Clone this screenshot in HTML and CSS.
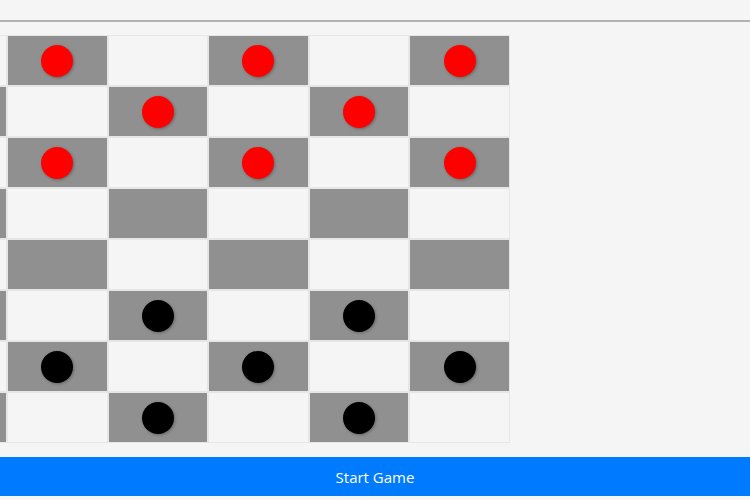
FILE: index.html
```html
<!DOCTYPE html>
<html lang="en">
<head>
<meta charset="utf-8">
<title>Checkers</title>
<link rel="stylesheet" href="styles.css">
</head>
<body>
<header class="topbar"></header>
<main class="stage">
  <div class="board">
    <div class="cell"></div><div class="cell dark"><span class="piece red"></span></div><div class="cell"></div><div class="cell dark"><span class="piece red"></span></div><div class="cell"></div><div class="cell dark"><span class="piece red"></span></div><div class="cell"></div><div class="cell dark"><span class="piece red"></span></div>
    <div class="cell dark"><span class="piece red"></span></div><div class="cell"></div><div class="cell dark"><span class="piece red"></span></div><div class="cell"></div><div class="cell dark"><span class="piece red"></span></div><div class="cell"></div><div class="cell dark"><span class="piece red"></span></div><div class="cell"></div>
    <div class="cell"></div><div class="cell dark"><span class="piece red"></span></div><div class="cell"></div><div class="cell dark"><span class="piece red"></span></div><div class="cell"></div><div class="cell dark"><span class="piece red"></span></div><div class="cell"></div><div class="cell dark"><span class="piece red"></span></div>
    <div class="cell dark"></div><div class="cell"></div><div class="cell dark"></div><div class="cell"></div><div class="cell dark"></div><div class="cell"></div><div class="cell dark"></div><div class="cell"></div>
    <div class="cell"></div><div class="cell dark"></div><div class="cell"></div><div class="cell dark"></div><div class="cell"></div><div class="cell dark"></div><div class="cell"></div><div class="cell dark"></div>
    <div class="cell dark"><span class="piece black"></span></div><div class="cell"></div><div class="cell dark"><span class="piece black"></span></div><div class="cell"></div><div class="cell dark"><span class="piece black"></span></div><div class="cell"></div><div class="cell dark"><span class="piece black"></span></div><div class="cell"></div>
    <div class="cell"></div><div class="cell dark"><span class="piece black"></span></div><div class="cell"></div><div class="cell dark"><span class="piece black"></span></div><div class="cell"></div><div class="cell dark"><span class="piece black"></span></div><div class="cell"></div><div class="cell dark"><span class="piece black"></span></div>
    <div class="cell dark"><span class="piece black"></span></div><div class="cell"></div><div class="cell dark"><span class="piece black"></span></div><div class="cell"></div><div class="cell dark"><span class="piece black"></span></div><div class="cell"></div><div class="cell dark"><span class="piece black"></span></div><div class="cell"></div>
  </div>
</main>
<button class="start-btn" type="button">Start Game</button>
</body>
</html>
```
FILE: styles.css
```css
* { box-sizing: border-box; }

html, body {
  margin: 0;
  padding: 0;
  height: 100%;
  overflow: hidden;
}

body {
  background: #f5f5f5;
  font-family: "Open Sans", "Noto Sans", "Liberation Sans", sans-serif;
  display: flex;
  flex-direction: column;
}

.topbar {
  height: 22px;
  border-bottom: 2px solid #b3b3b3;
  flex: none;
}

.stage {
  flex: none;
  padding-top: 13px;
}

.board {
  width: 805px;
  margin-left: -295px;
  display: grid;
  grid-template-columns: repeat(8, 1fr);
  grid-auto-rows: 51px;
}

.cell {
  background: #f5f5f5;
  border: 1px solid #e6e6e6;
  display: flex;
  align-items: center;
  justify-content: center;
}

.cell.dark {
  background: #909090;
}

.piece {
  width: 32px;
  height: 32px;
  border-radius: 50%;
  box-shadow: 1px 1px 3px rgba(0, 0, 0, 0.3);
}

.piece.red { background: #ff0000; }
.piece.black { background: #000000; }

.start-btn {
  flex: none;
  margin-top: 14px;
  height: 39px;
  width: 100%;
  border: none;
  background: #007bff;
  color: #ffffff;
  font-family: "Open Sans", "Noto Sans", "Liberation Sans", sans-serif;
  font-size: 15px;
  padding: 0;
  cursor: pointer;
}
```
